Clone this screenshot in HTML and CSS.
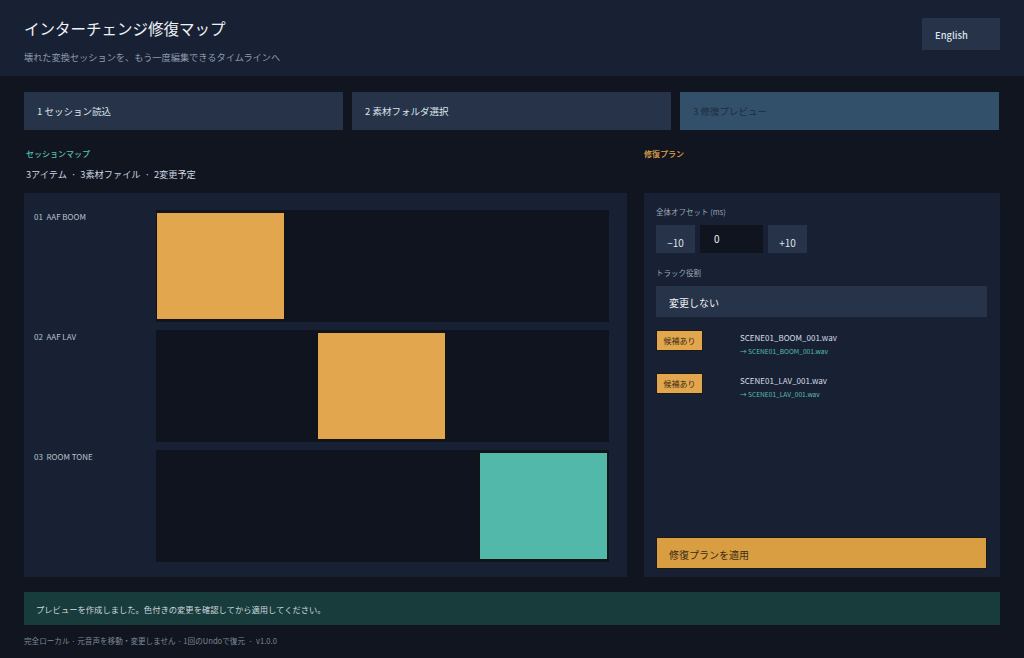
FILE: index.html
```html
<!DOCTYPE html>
<html lang="ja">

<head>
    <meta charset="UTF-8" />
    <meta name="viewport" content="width=device-width, initial-scale=1.0" />
    <title>インターチェンジ修復マップ</title>

    <link rel="stylesheet" href="styles.css">
</head>

<body>
    <!-- HEADER -->
    <header class="topbar">
        <div>
            <h1>インターチェンジ修復マップ</h1>
            <p class="subtitle">壊れた変換セッションを、もう一度編集できるタイムラインへ</p>
        </div>
        <button class="lang">English</button>
    </header>

    <main>
        <!-- STEPS -->
        <div class="steps">
            <div class="step">1 セッション読込</div>
            <div class="step">2 素材フォルダ選択</div>
            <div class="step active">3 修復プレビュー</div>
        </div>

        <div class="columns">
            <!-- SESSION MAP -->
            <section>
                <div class="col-head">
                    <div class="eyebrow teal">セッションマップ</div>
                    <div class="summary">3アイテム &nbsp;·&nbsp; 3素材ファイル &nbsp;·&nbsp; 2変更予定</div>
                </div>
                <div class="panel map">
                    <div class="track">
                        <div class="track-name">01&nbsp; AAF BOOM</div>
                        <div class="lane">
                            <div class="clip" style="left: 0%"></div>
                        </div>
                    </div>
                    <div class="track">
                        <div class="track-name">02&nbsp; AAF LAV</div>
                        <div class="lane">
                            <div class="clip" style="left: 35.5%"></div>
                        </div>
                    </div>
                    <div class="track">
                        <div class="track-name">03&nbsp; ROOM TONE</div>
                        <div class="lane">
                            <div class="clip tone" style="left: 71.3%"></div>
                        </div>
                    </div>
                </div>
            </section>

            <!-- REPAIR PLAN -->
            <section>
                <div class="col-head right">
                    <div class="eyebrow orange">修復プラン</div>
                </div>
                <div class="panel plan">
                    <label class="field-label">全体オフセット (ms)</label>
                    <div class="offset">
                        <button class="nudge minus">−10</button>
                        <input type="text" value="0" />
                        <button class="nudge">+10</button>
                    </div>

                    <label class="field-label">トラック役割</label>
                    <div class="select">変更しない</div>

                    <div class="matches">
                        <div class="match">
                            <span class="badge">候補あり</span>
                            <div class="names">
                                <div class="file">SCENE01_BOOM_001.wav</div>
                                <div class="target">→ SCENE01_BOOM_001.wav</div>
                            </div>
                        </div>
                        <div class="match">
                            <span class="badge">候補あり</span>
                            <div class="names">
                                <div class="file">SCENE01_LAV_001.wav</div>
                                <div class="target">→ SCENE01_LAV_001.wav</div>
                            </div>
                        </div>
                    </div>

                    <button class="apply">修復プランを適用</button>
                </div>
            </section>
        </div>

        <!-- NOTICE -->
        <div class="notice">プレビューを作成しました。色付きの変更を確認してから適用してください。</div>

        <footer>完全ローカル · 元音声を移動・変更しません · 1回のUndoで復元 &nbsp;·&nbsp; v1.0.0</footer>
    </main>
</body>

</html>
```

FILE: styles.css
```css
body {
    margin: 0;
    background: #10151f;
    color: #d6dde8;
    font-family: "Noto Sans CJK JP", "Noto Sans", sans-serif;
}

button,
input {
    font-family: inherit;
}

.topbar {
    height: 76px;
    box-sizing: border-box;
    padding: 18px 24px 0 24px;
    background: #172133;
    display: flex;
    justify-content: space-between;
    align-items: flex-start;
}

.topbar h1 {
    margin: 0;
    font-size: 15.5px;
    font-weight: 400;
    line-height: 20px;
    color: #eef1f6;
}

.subtitle {
    margin: 12px 0 0 0;
    font-size: 9.2px;
    color: #8e9ab0;
}

.lang {
    width: 78px;
    height: 32px;
    border: 0;
    background: #263348;
    color: #dfe5ee;
    font-size: 9.4px;
    font-weight: 500;
    text-align: left;
    padding: 2px 13px 0 13px;
}

main {
    padding: 16px 24px 0 24px;
}

.steps {
    display: grid;
    grid-template-columns: 319px 319px 319px;
    gap: 9px;
}

.step {
    height: 38px;
    box-sizing: border-box;
    padding: 0 13px;
    display: flex;
    align-items: center;
    background: #263348;
    font-size: 9.5px;
    color: #dde3ec;
}

.step.active {
    background: #33506a;
    color: #1d2d40;
}

.columns {
    display: grid;
    grid-template-columns: 603px 356px;
    gap: 17px;
}

.col-head {
    height: 63px;
    box-sizing: border-box;
    padding: 18px 2px 0 2px;
}

.col-head.right {
    padding-left: 0;
}

.eyebrow {
    font-size: 8px;
    font-weight: 500;
    line-height: 12px;
}

.teal {
    color: #5cbfae;
}

.orange {
    color: #e2a64a;
}

.summary {
    margin-top: 7px;
    font-size: 9.2px;
    color: #cfd6e1;
}

.panel {
    height: 384px;
    box-sizing: border-box;
    background: #172133;
}

.map {
    padding: 17px 18px 0 10px;
    display: flex;
    flex-direction: column;
    gap: 8px;
}

.track {
    display: flex;
}

.track-name {
    width: 122px;
    padding-top: 1px;
    font-size: 8px;
    color: #b8c1cf;
}

.lane {
    position: relative;
    flex: 1;
    height: 112px;
    background: #0f141f;
}

.clip {
    position: absolute;
    top: 2px;
    bottom: 2px;
    width: 28.5%;
    box-sizing: border-box;
    background: #e1a64e;
    border: 1px solid #15130f;
}

.clip.tone {
    background: #52b8a9;
}

.plan {
    padding: 13px 13px 8px 12px;
    display: flex;
    flex-direction: column;
}

.field-label {
    font-size: 7.5px;
    color: #9aa6b8;
}

.offset {
    display: flex;
    gap: 5px;
    margin: 8px 0 14px 0;
}

.nudge {
    width: 39px;
    height: 28px;
    border: 0;
    padding: 6px 0 0 0;
    background: #263348;
    color: #dfe5ee;
    font-size: 10px;
}

.offset input {
    width: 63px;
    height: 28px;
    box-sizing: border-box;
    border: 0;
    padding: 0 0 2px 14px;
    background: #0f141f;
    color: #eef1f6;
    font-size: 10px;
}

.select {
    height: 31px;
    margin-top: 8px;
    box-sizing: border-box;
    padding: 2px 13px 0 13px;
    display: flex;
    align-items: center;
    background: #263348;
    font-size: 10px;
    color: #eef1f6;
}

.matches {
    margin-top: 13px;
    display: flex;
    flex-direction: column;
    gap: 16px;
}

.match {
    display: flex;
    align-items: flex-start;
    gap: 37px;
}

.badge {
    width: 47px;
    height: 21px;
    box-sizing: border-box;
    display: flex;
    align-items: center;
    justify-content: center;
    background: #e1a64e;
    border: 1px solid #1c1a14;
    color: #3a2c14;
    font-size: 8px;
}

.names {
    padding-top: 1px;
}

.file {
    font-size: 8px;
    color: #d8dee8;
    line-height: 14px;
}

.target {
    font-size: 6.6px;
    line-height: 12px;
    color: #5cbfae;
}

.apply {
    margin-top: auto;
    height: 32px;
    border: 1px solid #1a1a18;
    background: #d99d42;
    color: #3a2c14;
    font-size: 10px;
    text-align: left;
    padding: 2px 12px 0 12px;
}

.notice {
    margin-top: 15px;
    height: 33px;
    box-sizing: border-box;
    padding: 0 12px;
    display: flex;
    align-items: center;
    background: #183b3c;
    font-size: 8.3px;
    color: #cdd9dc;
}

footer {
    margin-top: 10px;
    font-size: 7.6px;
    color: #7e889a;
}
```
